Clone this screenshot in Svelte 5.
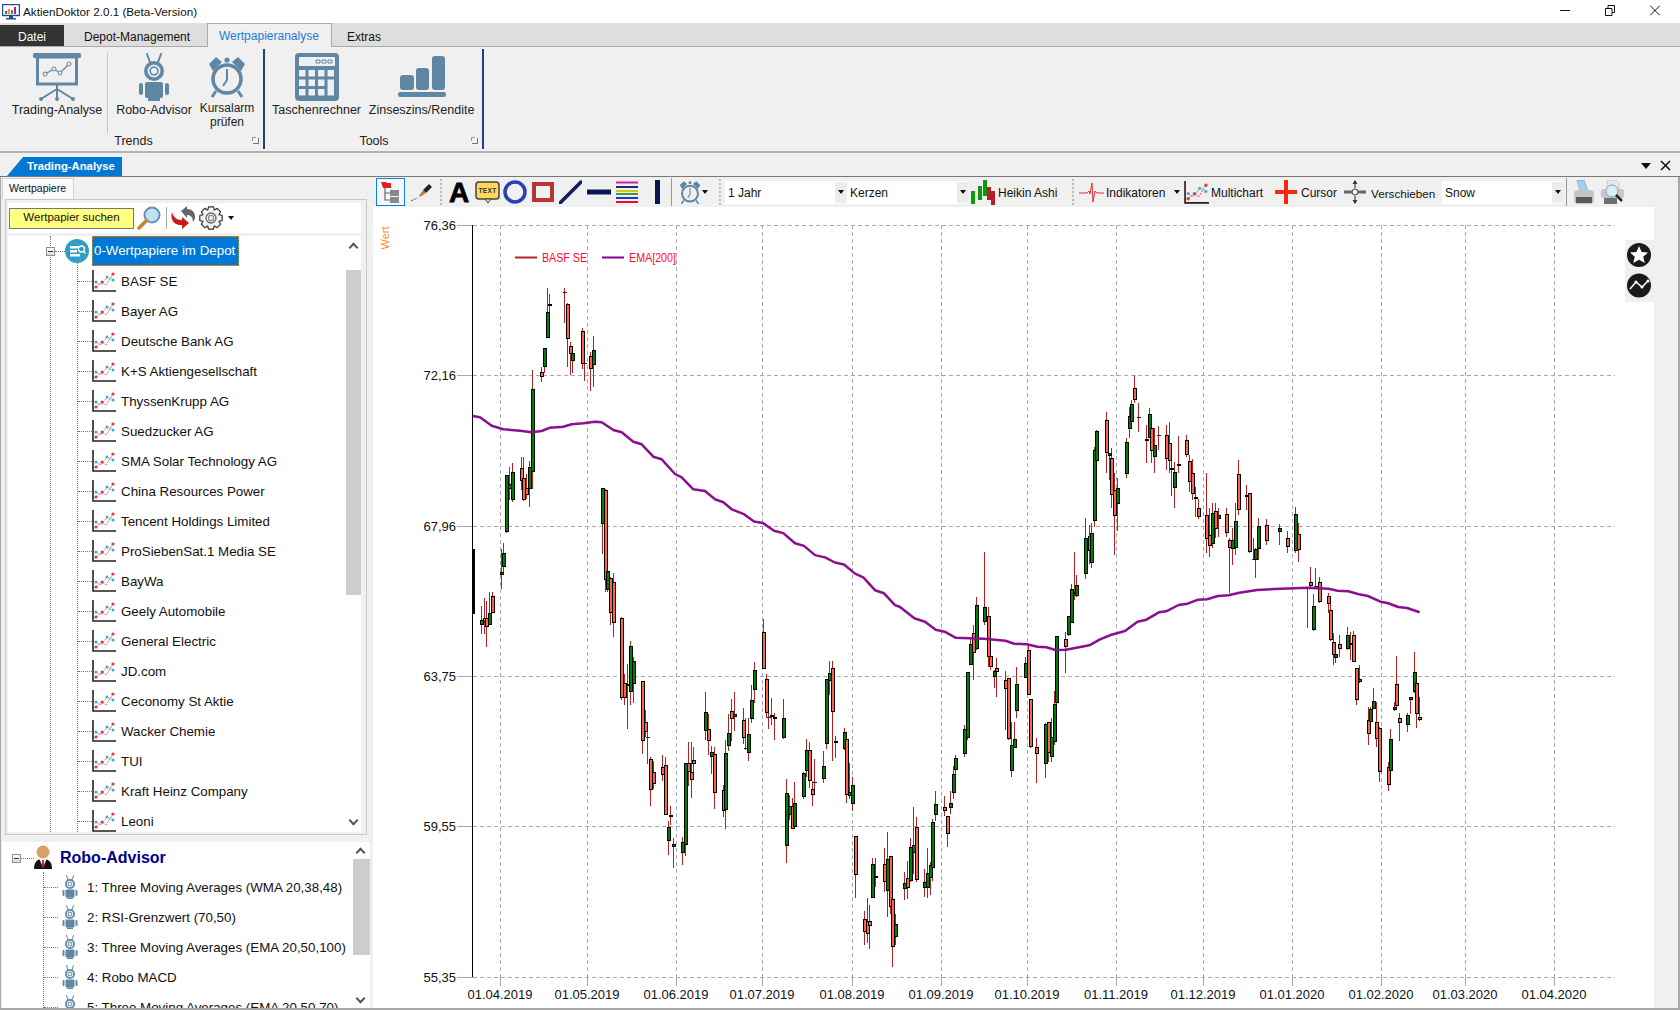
<script>
  const stocks = ["BASF SE", "Bayer AG", "Deutsche Bank AG", "K+S Aktiengesellschaft", "ThyssenKrupp AG", "Suedzucker AG", "SMA Solar Technology AG", "China Resources Power", "Tencent Holdings Limited", "ProSiebenSat.1 Media SE", "BayWa", "Geely Automobile", "General Electric", "JD.com", "Ceconomy St Aktie", "Wacker Chemie", "TUI", "Kraft Heinz Company", "Leoni"]
  const robots = ["1: Three Moving Averages (WMA 20,38,48)", "2: RSI-Grenzwert (70,50)", "3: Three Moving Averages (EMA 20,50,100)", "4: Robo MACD", "5: Three Moving Averages (EMA 20,50,70)"]

  // candles: x, wick top, wick bottom, body top, body bottom, kind
  const full = [
    [506, 475, 533, 475, 531.7, "g"], [509.3, 466.7, 500, 484, 489, "g"], [512.3, 462.7, 502, 472, 499.6, "g"],
    [521, 457, 490, 468, 480.7, "r"], [523.3, 457, 501, 478, 499.6, "r"], [526.3, 474, 499, 488, 494.5, "r"],
    [529.3, 460.7, 507, 466.7, 488.5, "g"], [532.3, 370, 489, 389.3, 472, "g"], [602, 488, 553.7, 488, 524, "g"], [604.7, 489, 592, 489.5, 580, "r"],
  ]
  const z6 = [
    [364,290,335,307,320,"r"],[372,265,308,235,292,"g"],[381,55,205,127,205,"g"],[388,72,200,103,107,"g"],[433,55,160,66,67,"d"],[441,100,290,103,208,"r"],[450,215,315,229,253,"r"],[457,235,308,248,272,"g"],[485,175,296,184,283,"r"],[493,252,332,278,279,"d"],[510,245,362,257,298,"r"],[518,198,350,241,286,"g"],
  ]
  const z7 = [
    [182,373,455,415,430,"g"],[191,350,455,407,420,"r"],[199,358,493,407,436,"r"],[208,332,430,392,430,"g"],[217,330,393,344,392,"r"],[242,205,322,273,280,"g"],[250,187,275,217,256,"g"],[562,172,330,268,326,"g"],[571,288,430,289,394,"r"],[579,275,463,303,424,"r"],[604,405,650,408,646,"r"],[612,575,665,600,646,"r"],[622,545,738,603,607,"g"],[631,475,665,492,628,"g"],[640,525,660,534,602,"g"],[666,595,810,596,773,"r"],[674,680,760,717,745,"r"],[682,722,840,761,762,"d"],[691,820,963,826,918,"r"],[700,830,915,865,900,"r"],[726,812,890,848,874,"r"],[735,820,990,842,990,"r"],[743,1010,1110,1025,1069,"g"],[751,963,1020,992,998,"r"],[760,1060,1147,1078,1085,"g"],[787,1055,1138,1070,1103,"g"],[795,838,1113,838,1080,"g"],[804,775,905,838,865,"r"],[813,775,940,865,886,"r"],[820,790,880,829,841,"r"],[856,628,770,685,741,"g"],[865,692,812,736,773,"r"],[873,788,870,806,820,"g"],[882,790,972,810,927,"r"],[908,903,998,918,980,"r"],[916,770,1032,809,977,"g"],[925,692,802,747,788,"g"],[934,648,772,682,708,"r"],[943,628,742,693,702,"g"],[968,675,780,711,762,"r"],[976,705,800,794,795,"d"],[985,705,832,752,809,"g"],[994,605,720,652,708,"g"],[1003,538,660,563,622,"g"],[1029,410,560,449,560,"r"],[1037,575,705,590,690,"r"],[1045,660,738,702,703,"d"],[1054,645,725,694,700,"g"],[1063,690,768,702,708,"r"],[1089,648,765,705,764,"g"],[1098,885,1132,925,1084,"g"],[1106,932,1005,965,990,"g"],[1115,940,1032,965,1032,"r"],[1123,893,1025,955,1025,"g"],[1150,865,943,868,937,"g"],[1159,767,880,798,862,"g"],[1167,775,910,798,890,"r"],[1175,890,965,915,933,"r"],[1183,825,925,894,895,"d"],[1210,803,895,845,884,"g"],[1219,590,795,590,782,"g"],[1227,535,635,570,596,"g"],[1236,535,832,555,687,"r"],[1244,758,822,773,779,"g"],[1271,735,798,744,797,"g"],[1279,745,955,765,933,"r"],[1288,838,945,922,935,"g"],[1296,880,980,903,957,"g"],[1305,1052,1236,1052,1167,"r"],[1331,1275,1375,1298,1338,"r"],[1340,1235,1370,1304,1344,"r"],[1348,1258,1388,1304,1318,"r"],[1357,1118,1235,1137,1235,"g"],[1366,1118,1205,1170,1175,"r"],[1391,1088,1220,1135,1190,"r"],[1400,1042,1293,1120,1217,"g"],[1409,1113,1285,1113,1262,"r"],[1417,1238,1440,1238,1380,"r"],[1426,1285,1375,1313,1353,"g"],[1451,1160,1242,1193,1211,"g"],[1460,1128,1240,1178,1206,"r"],[1469,1060,1190,1085,1185,"g"],[1478,968,1165,1080,1103,"g"],[1487,998,1190,1025,1182,"r"],
  ]
  const z9 = [
    [72,448,530,487,503,"g"],[80,385,533,460,503,"g"],[89,427,525,436,475,"g"],[97,297,483,307,445,"g"],[106,213,302,253,284,"g"],[133,228,288,262,272,"r"],[141,289,380,289,341,"r"],[150,213,282,250,263,"g"],[158,138,237,163,218,"g"],[166,105,205,115,149,"g"],
  ]
  const z8 = [
    [178,1095,1190,1107,1182,"g"],[188,935,1140,937,1135,"g"],[197,835,915,853,915,"g"],[205,795,960,818,880,"r"],[213,712,870,736,868,"g"],[236,575,795,742,785,"g"],[245,740,920,769,892,"r"],[253,870,930,889,920,"r"],[262,930,985,932,950,"g"],[268,895,1012,923,935,"r"],[293,933,1110,960,986,"r"],[301,955,1140,955,1138,"r"],[310,1087,1250,1155,1232,"g"],[318,1087,1165,1138,1163,"g"],[326,920,1075,973,1052,"g"],[349,890,955,910,955,"g"],[357,855,1005,871,1004,"r"],[365,1017,1165,1018,1162,"r"],[382,1135,1268,1162,1181,"r"],[406,1090,1255,1093,1213,"g"],[414,1085,1205,1087,1180,"r"],[422,1075,1205,1132,1192,"g"],[430,993,1155,1033,1145,"g"],[438,828,1037,829,1028,"g"],[463,815,938,838,860,"r"],[470,770,828,767,826,"g"],[479,672,790,686,788,"g"],[486,577,720,695,701,"g"],[494,645,710,676,709,"g"],[519,475,657,535,643,"g"],[528,495,612,527,574,"r"],[535,490,623,518,610,"g"],[543,260,500,271,484,"g"],[550,210,340,212,304,"g"],[576,155,340,181,280,"r"],[584,280,360,280,287,"g"],[592,265,445,295,406,"r"],[600,340,585,389,469,"r"],[607,355,512,385,433,"g"],[632,235,355,247,341,"g"],[640,140,235,169,208,"g"],[648,120,200,133,185,"g"],[656,46,130,85,121,"r"],[665,128,215,172,173,"d"],[688,195,308,238,244,"g"],[696,145,235,163,233,"g"],[704,188,308,205,274,"r"],[712,205,338,256,290,"g"],[721,198,270,226,227,"d"],[745,195,330,226,296,"r"],[752,185,340,250,302,"r"],[760,300,408,325,331,"g"],[768,305,445,337,385,"g"],[777,228,340,313,319,"g"],[801,225,290,241,284,"r"],[810,285,395,302,367,"r"],[818,298,420,338,403,"r"],[825,380,470,412,418,"g"],[833,418,478,445,470,"r"],[858,340,580,466,538,"r"],[866,445,590,524,558,"r"],[874,428,565,458,553,"g"],[882,430,533,452,508,"r"],[889,445,532,464,478,"g"],[914,445,530,463,518,"r"],[922,535,700,539,563,"r"],[930,505,615,541,568,"g"],[938,430,585,484,565,"g"],[946,300,465,343,451,"r"],[970,375,450,404,412,"g"],[978,398,580,400,575,"r"],[987,533,600,598,599,"d"],[995,565,655,568,601,"g"],[1003,475,600,499,568,"g"],[1026,478,555,496,544,"r"],[1060,493,555,505,517,"g"],[1083,513,580,535,562,"r"],[1107,440,580,463,574,"g"],[1115,490,605,523,571,"r"],[1140,680,803,680,681,"d"],[1147,622,680,667,677,"r"],[1155,703,812,737,811,"g"],[1163,625,678,677,678,"d"],[1172,650,730,667,727,"r"],[1197,700,760,709,731,"r"],[1204,730,842,751,841,"r"],[1212,820,915,847,886,"r"],[1219,870,908,881,895,"g"],[1228,825,890,853,868,"r"],[1252,800,870,826,868,"g"],[1260,815,900,848,856,"g"],[1268,812,905,826,905,"r"],[1277,925,1035,925,1021,"r"],[1285,915,970,956,967,"g"],[1309,1040,1155,1081,1123,"r"],[1317,1040,1120,1048,1085,"g"],[1325,985,1045,1024,1046,"g"],[1332,1027,1160,1085,1138,"r"],[1341,1100,1265,1103,1237,"r"],[1365,1205,1292,1222,1276,"r"],[1373,1107,1262,1138,1234,"g"],[1382,1027,1052,1042,1049,"g"],[1390,888,1050,973,1037,"r"],[1398,1060,1142,1075,1090,"r"],[1420,1060,1115,1064,1096,"g"],[1429,1010,1062,1012,1021,"g"],[1438,877,998,937,997,"g"],[1446,950,1105,970,1063,"r"],[1454,1010,1082,1072,1081,"r"],
  ]

  function conv(list, ox, oy, sx, sy) {
    return list.map((c) => ({
      x: Math.round(ox + c[0] / sx),
      wt: Math.round(oy + c[1] / sy),
      wb: Math.round(oy + c[2] / sy),
      bt: Math.round(oy + c[3] / sy),
      bb: Math.round(oy + c[4] / sy),
      k: c[5],
    }))
  }

  const candles = [
    ...full.map((c) => ({ x: Math.round(c[0]), wt: Math.round(c[1]), wb: Math.round(c[2]), bt: Math.round(c[3]), bb: Math.round(c[4]), k: c[5] })),
    ...conv(z6, 420, 270, 3, 3),
    ...conv(z7, 420, 480, 3, 2.958),
    ...conv(z9, 900, 720, 3, 3),
    ...conv(z8, 900, 360, 2.8, 3),
  ]

  const ema6 = [[158,438],[180,442],[215,467],[250,478],[300,482],[335,487],[365,483],[390,473],[430,470],[455,463],[490,460],[525,455],[545,457],[580,480],[605,487],[640,515],[665,523],[700,560],[725,568],[765,612],[785,622],[820,658],[855,663],[885,688],[910,697],[935,718]]
  const ema7 = [[970,100],[1002,123],[1028,127],[1062,150],[1090,157],[1125,187],[1152,195],[1185,222],[1215,229],[1245,244],[1272,250],[1305,277],[1330,288],[1365,326],[1392,335],[1425,370]]
  const ema8 = [[0,741],[40,775],[70,785],[100,809],[125,815],[155,833],[235,836],[295,842],[320,851],[355,853],[385,860],[410,862],[435,870],[465,869],[530,856],[560,838],[590,825],[630,813],[665,785],[690,779],[725,757],[745,754],[780,735],[805,731],[835,719],[860,718],[890,708],[920,706],[950,698],[1000,690],[1050,687],[1140,683],[1200,686],[1225,692],[1255,694],[1285,703],[1310,708],[1345,725],[1365,729],[1395,741],[1420,744],[1455,757]]
  const emaPoints = [
    ...ema6.map((p) => [420 + p[0] / 3, 270 + p[1] / 3]),
    ...ema7.map((p) => [420 + p[0] / 3, 480 + p[1] / 2.958]),
    ...ema8.map((p) => [900 + p[0] / 2.8, 360 + p[1] / 3]),
  ].map((p) => p[0].toFixed(1) + "," + p[1].toFixed(1)).join(" ")

  const yLines = [[225, "76,36"], [375, "72,16"], [526, "67,96"], [676, "63,75"], [826, "59,55"], [977, "55,35"]]
  const xLines = [[500, "01.04.2019"], [587, "01.05.2019"], [676, "01.06.2019"], [762, "01.07.2019"], [852, "01.08.2019"], [941, "01.09.2019"], [1027, "01.10.2019"], [1116, "01.11.2019"], [1203, "01.12.2019"], [1292, "01.01.2020"], [1381, "01.02.2020"], [1465, "01.03.2020"], [1554, "01.04.2020"]]

  // 8 tooth outline for the settings icon
  function gearPoints(cx, cy, outer, inner, teeth) {
    const pts = []
    const step = (Math.PI * 2) / teeth
    for (let i = 0; i < teeth; i++) {
      const a = i * step
      for (const [r, d] of [[inner, -0.5], [outer, -0.28], [outer, 0.28], [inner, 0.5]]) {
        const t = a + d * step
        pts.push((cx + Math.cos(t) * r).toFixed(1) + "," + (cy + Math.sin(t) * r).toFixed(1))
      }
    }
    return pts.join(" ")
  }
  const gear = gearPoints(12, 12, 11.5, 8.5, 8)
</script>

{#snippet chartIcon(w, h)}
  <svg width={w} height={h} viewBox="0 0 24 24">
    <path d="M1 1V22H24" fill="none" stroke="#222" stroke-width="1.6" />
    <polyline points="4,18 10,13 14,16 21,5" fill="none" stroke="#ef6a6a" stroke-width="1" stroke-dasharray="2 1" />
    <polyline points="4,13 9,16 15,8 21,11" fill="none" stroke="#55b5e6" stroke-width="1" stroke-dasharray="2 1" />
    <circle cx="4" cy="18" r="1.6" fill="#e33" /><circle cx="10" cy="13" r="1.5" fill="#e33" /><circle cx="21" cy="5" r="1.6" fill="#e33" />
    <circle cx="4" cy="13" r="1.5" fill="#3aa9e0" /><circle cx="15" cy="8" r="1.5" fill="#3aa9e0" /><circle cx="21" cy="11" r="1.5" fill="#3aa9e0" />
  </svg>
{/snippet}

{#snippet robot(w, h)}
  <svg width={w} height={h} viewBox="0 0 30 48">
    <path d="M8 1l4 11M22 1l-4 11" stroke="#5f87a3" stroke-width="2" stroke-linecap="round" />
    <circle cx="15" cy="18" r="10" fill="#5f87a3" />
    <circle cx="15" cy="18" r="6.500" fill="#dfe8ee" /><circle cx="15" cy="18" r="4.500" fill="#5f87a3" /><circle cx="15" cy="18" r="3" fill="#eef3f6" />
    <rect x="6" y="29" width="18" height="16" rx="2" fill="#5f87a3" />
    <rect x="0" y="30" width="4" height="12" rx="2" fill="#5f87a3" /><rect x="26" y="30" width="4" height="12" rx="2" fill="#5f87a3" />
    <rect x="9" y="45" width="12" height="3" fill="#5f87a3" />
  </svg>
{/snippet}

{#snippet clock(w, h)}
  <svg width={w} height={h} viewBox="0 0 38 44">
    <circle cx="19" cy="24" r="14" fill="none" stroke="#5f87a3" stroke-width="3.500" />
    <path d="M19 14v11l-4 6" fill="none" stroke="#5f87a3" stroke-width="2" />
    <path d="M1 9l7-7 6 5-9 9zM37 9l-7-7-6 5 9 9z" fill="#5f87a3" />
    <circle cx="19" cy="5" r="2.600" fill="#5f87a3" />
    <path d="M8 36l-4 6M30 36l4 6" stroke="#5f87a3" stroke-width="3" />
  </svg>
{/snippet}

<div class="app">
  <div class="titlebar">
    <svg class="appicon" width="18" height="16" viewBox="0 0 18 16">
      <rect x="0.5" y="0.5" width="17" height="11" fill="#fff" stroke="#1c4f94" stroke-width="1.4" />
      <rect x="3" y="7" width="2" height="3" fill="#d33" /><rect x="6" y="5" width="2" height="5" fill="#e89a1c" /><rect x="9" y="6" width="2" height="4" fill="#2f9e44" /><rect x="12" y="3" width="2" height="7" fill="#c2187c" />
      <path d="M7 12h4v2h3v1.500H4V14h3z" fill="#1c4f94" />
    </svg>
    <span class="apptitle">AktienDoktor 2.0.1 (Beta-Version)</span>
    <div class="winbtns">
      <svg width="10" height="11" viewBox="0 0 10 11"><path d="M0 5.500h10" stroke="#111" /></svg>
      <svg width="10" height="11" viewBox="0 0 10 11"><path d="M.5 3.500h6.500v7H.5zM3 3.500V.5h6.500v7H7" fill="none" stroke="#111" /></svg>
      <svg width="10" height="11" viewBox="0 0 10 11"><path d="M0 .5l10 10M10 .5L0 10.500" fill="none" stroke="#111" /></svg>
    </div>
  </div>

  <div class="tabs">
    <div class="tab datei">Datei</div>
    <div class="tab depot">Depot-Management</div>
    <div class="tab active">Wertpapieranalyse</div>
    <div class="tab extras">Extras</div>
  </div>

  <div class="ribbon">
    <div class="group trends">
      <div class="grp-items">
        <div class="rb w94">
          <div class="rb-icon">
            <svg width="48" height="48" viewBox="0 0 48 48">
              <rect x="0" y="0" width="48" height="5" rx="1.500" fill="#5f87a3" />
              <rect x="4.500" y="4" width="39" height="27" fill="#f0f0f0" stroke="#5f87a3" stroke-width="3" />
              <polyline points="12,21 21,16 27,20 36,11" fill="none" stroke="#5f87a3" stroke-width="1.300" />
              <circle cx="12" cy="21" r="2" fill="#f0f0f0" stroke="#5f87a3" /><circle cx="21" cy="16" r="2" fill="#f0f0f0" stroke="#5f87a3" /><circle cx="27" cy="20" r="2" fill="#f0f0f0" stroke="#5f87a3" /><circle cx="36" cy="11" r="2" fill="#f0f0f0" stroke="#5f87a3" />
              <path d="M24 32v14M24 36L8 46M24 36l16 10" stroke="#5f87a3" stroke-width="2" />
              <circle cx="8" cy="46" r="2" fill="#5f87a3" /><circle cx="24" cy="46" r="2" fill="#5f87a3" /><circle cx="40" cy="46" r="2" fill="#5f87a3" />
            </svg>
          </div>
          <span>Trading-Analyse</span>
        </div>
        <div class="rb-sep"></div>
        <div class="rb w88">
          <div class="rb-icon">{@render robot(30, 48)}</div>
          <span>Robo-Advisor</span>
        </div>
        <div class="rb w58">
          <div class="rb-icon">{@render clock(38, 44)}</div>
          <span class="two">Kursalarm<br />prüfen</span>
        </div>
      </div>
      <div class="grp-label">Trends<span class="launcher"></span></div>
    </div>
    <div class="group tools">
      <div class="grp-items">
        <div class="rb w90">
          <div class="rb-icon">
            <svg width="44" height="48" viewBox="0 0 44 48">
              <rect width="44" height="48" rx="4" fill="#5f87a3" />
              <rect x="4" y="4" width="36" height="9" rx="1" fill="#eef1f3" />
              <path d="M21 7h4v3h-4zM27 7h4v3h-4zM33 7h4v3h-4z" fill="none" stroke="#5f87a3" />
              {#each [0, 1, 2, 3] as c}
                {#each [0, 1, 2] as r}
                  {#if !(c === 3 && r > 0)}
                    <rect x={4 + c * 9.500} y={17 + r * 9.500} width="6.500" height="6.500" fill="#eef1f3" />
                  {/if}
                {/each}
              {/each}
              <rect x="32.500" y="26.500" width="6.500" height="16" fill="#eef1f3" />
            </svg>
          </div>
          <span>Taschenrechner</span>
        </div>
        <div class="rb w122">
          <div class="rb-icon">
            <svg width="48" height="41" viewBox="0 0 48 41">
              <rect x="2" y="19" width="14" height="15" rx="3" fill="#5f87a3" />
              <rect x="18" y="12" width="13" height="22" rx="3" fill="#5f87a3" />
              <rect x="34" y="0" width="13" height="34" rx="3" fill="#5f87a3" />
              <rect x="0" y="36" width="48" height="5" rx="2" fill="#5f87a3" />
            </svg>
          </div>
          <span>Zinseszins/Rendite</span>
        </div>
      </div>
      <div class="grp-label">Tools<span class="launcher"></span></div>
    </div>
  </div>

  <div class="docbar">
    <div class="doctab">Trading-Analyse</div>
    <div class="docbtns">
      <span class="caret big"></span>
      <svg width="11" height="11" viewBox="0 0 11 11"><path d="M1 1l9 9M10 1l-9 9" stroke="#111" stroke-width="1.500" /></svg>
    </div>
  </div>

  <div class="main">
    <div class="left">
      <div class="lefttabs"><div class="lefttab">Wertpapiere</div></div>
      <div class="panel">
        <div class="searchbar">
          <div class="searchbox">Wertpapier suchen</div>
          <svg class="ml3" width="24" height="24" viewBox="0 0 24 24">
            <circle cx="15" cy="9" r="7.500" fill="#bfe0f5" stroke="#6b93b5" stroke-width="2" />
            <path d="M9.500 14.500L2 22" stroke="#c9822c" stroke-width="3.500" stroke-linecap="round" />
          </svg>
          <div class="vsep"></div>
          <svg class="ml4" width="25" height="24" viewBox="0 0 25 24">
            <path d="M10 5l6-5v3c5 0 8 3 8 8 0 2-1 4-2 5 0-4-2-7-6-7v3z" fill="#666" />
            <path d="M1 6c-2 6 1 13 9 13h1v4l7-6-7-6v3h-1C6 14 2 11 1 6z" fill="#cc1a1a" />
          </svg>
          <svg class="ml3" width="24" height="24" viewBox="0 0 24 24">
            <polygon points={gear} fill="#f4f4f4" stroke="#333" stroke-width="1.200" stroke-linejoin="round" />
            <circle cx="12" cy="12" r="5" fill="none" stroke="#666" stroke-width="1.300" />
            <circle cx="12" cy="12" r="2.600" fill="none" stroke="#888" stroke-width="1.200" />
          </svg>
          <span class="caret ml5"></span>
        </div>
        <div class="treewrap">
          <div class="tree">
            <div class="trunk">
              <div class="trow">
                <span class="expander"></span>
                <span class="conn c10"></span>
                <svg width="24" height="24" viewBox="0 0 24 24">
                  <circle cx="12" cy="12" r="12" fill="#2f9fc5" />
                  <path d="M5 7h9v2.500H5zM5 11h7v2.500H5zM5 15h10v2.500H5z" fill="#fff" />
                  <circle cx="16.500" cy="10" r="3" fill="none" stroke="#fff" stroke-width="1.300" /><path d="M18.500 12.500l2 2" stroke="#fff" stroke-width="1.300" />
                </svg>
                <span class="sel">0-Wertpapiere im Depot</span>
              </div>
              <div class="children">
                {#each stocks as s}
                  <div class="trow">
                    <span class="conn c14"></span>
                    {@render chartIcon(24, 24)}
                    <span class="lbl">{s}</span>
                  </div>
                {/each}
              </div>
            </div>
          </div>
          <div class="scroll">
            <span class="chev up"></span>
            <div class="thumb t1"></div>
            <span class="chev down"></span>
          </div>
        </div>
      </div>

      <div class="robo">
        <div class="robotree">
          <div class="rhead">
            <span class="expander"></span>
            <span class="conn c13"></span>
            <svg width="18" height="24" viewBox="0 0 18 24">
              <circle cx="9" cy="7" r="6.500" fill="#d9a067" />
              <path d="M0 24c0-7 3-10 9-10s9 3 9 10z" fill="#111" />
              <path d="M5.500 14h7L9 23z" fill="#fff" />
              <path d="M8 15h2l-.2 2 .7 5H7.500l.7-5z" fill="#c11" />
            </svg>
            <span class="robotitle">Robo-Advisor</span>
          </div>
          <div class="rchildren">
            {#each robots as r}
              <div class="trow">
                <span class="conn c14"></span>
                <span class="ricon">{@render robot(16, 24)}</span>
                <span class="lbl rlbl">{r}</span>
              </div>
            {/each}
          </div>
        </div>
        <div class="scroll s2">
          <span class="chev up"></span>
          <div class="thumb t2"></div>
          <span class="chev down"></span>
        </div>
      </div>
    </div>

    <div class="right">
      <div class="toolbar">
        <div class="tselect">
          <svg width="25" height="24" viewBox="0 0 25 24">
            <path d="M3 2h5l1 1h4v5H5z" fill="#d22" />
            <path d="M7 8v12h5M7 13h5" fill="none" stroke="#666" stroke-width="1.200" />
            <rect x="12" y="10" width="9" height="6" fill="#888" /><rect x="12" y="17" width="9" height="6" fill="#888" />
          </svg>
        </div>
        <svg class="m5" width="25" height="24" viewBox="0 0 25 24">
          <path d="M13 10l6-6 3 3-6 6z" fill="#222" />
          <path d="M9 16l4-6 3 3-6 4z" fill="#b6862c" />
          <path d="M1 21l6-3" stroke="#445" stroke-dasharray="2 1" />
        </svg>
        <span class="dots m5"></span>
        <span class="bigA">A</span>
        <svg class="m7" width="25" height="24" viewBox="0 0 25 24">
          <rect x="1" y="2" width="23" height="17" rx="3" fill="#ffd75e" stroke="#444" stroke-width="1.500" />
          <path d="M10 19h6l-3 4z" fill="#ffd75e" stroke="#444" />
          <text x="12.500" y="13" class="bubbletext">TEXT</text>
        </svg>
        <svg class="m3" width="24" height="24" viewBox="0 0 24 24"><circle cx="12" cy="12" r="10" fill="none" stroke="#2a3fb0" stroke-width="3.500" /></svg>
        <svg class="m5" width="22" height="24" viewBox="0 0 22 24"><rect x="2" y="4" width="18" height="16" fill="none" stroke="#b5333a" stroke-width="4" /></svg>
        <svg class="m5" width="23" height="24" viewBox="0 0 23 24"><path d="M1 23L22 2" stroke="#101f5c" stroke-width="3.500" stroke-linecap="round" /></svg>
        <svg class="m5" width="24" height="24" viewBox="0 0 24 24"><path d="M0 12h24" stroke="#0c1654" stroke-width="5" /></svg>
        <svg class="m5" width="22" height="24" viewBox="0 0 22 24">
          <path d="M0 2.500h22" stroke="#d020b0" stroke-width="2" /><path d="M0 7h22" stroke="#1c2a7a" stroke-width="2" /><path d="M0 11h22" stroke="#c8c820" stroke-width="2" /><path d="M0 14h22" stroke="#3aa02a" stroke-width="2" /><path d="M0 18h22" stroke="#2030d0" stroke-width="2" /><path d="M0 22h22" stroke="#e01030" stroke-width="2" />
        </svg>
        <svg class="m17" width="5" height="24" viewBox="0 0 5 24"><rect width="5" height="24" fill="#0c1654" /></svg>
        <span class="vbar m11"></span>
        <span class="m7 iconbox">{@render clock(22, 25)}</span>
        <span class="caret wide"></span>
        <span class="dots m10"></span>
        <div class="combo m4"><span>1 Jahr</span><b><i class="caret"></i></b></div>
        <div class="combo m1"><span>Kerzen</span><b><i class="caret"></i></b></div>
        <svg class="m3" width="24" height="26" viewBox="0 0 24 26">
          <rect x="0" y="12" width="4" height="13" fill="#0a9a0a" /><rect x="7" y="7" width="4" height="14" fill="#0a9a0a" /><rect x="12" y="1" width="4" height="16" fill="#0a9a0a" /><rect x="16" y="8" width="4" height="13" fill="#b3202a" /><rect x="20" y="12" width="4" height="14" fill="#b3202a" />
        </svg>
        <span class="tlbl w60 m3">Heikin Ashi</span>
        <span class="dots m14"></span>
        <svg class="m5" width="25" height="24" viewBox="0 0 25 24">
          <polyline points="0,13 8,13 10,11 11,14 13,3 14,22 16,11 18,13 25,13" fill="none" stroke="#e03030" stroke-width="1" />
        </svg>
        <span class="tlbl w60 m2">Indikatoren</span>
        <span class="caret wide m8"></span>
        <span class="m3 iconbox">{@render chartIcon(25, 25)}</span>
        <span class="tlbl w55 m2">Multichart</span>
        <svg class="m9" width="22" height="24" viewBox="0 0 22 24"><path d="M11 0v24M0 12h22" stroke="#f02a10" stroke-width="4" /></svg>
        <span class="tlbl w35 m4">Cursor</span>
        <svg class="m8" width="22" height="24" viewBox="0 0 22 24">
          <path d="M11 1v7M11 16v7" stroke="#666" stroke-width="1.500" />
          <path d="M0 12h8M14 12h8" stroke="#666" stroke-width="3" />
          <circle cx="11" cy="12" r="3" fill="none" stroke="#444" />
          <path d="M11 0l-2.500 4h5zM11 24l-2.500-4h5z" fill="#333" />
        </svg>
        <span class="tlbl w63 m5 condensed">Verschieben</span>
        <div class="combo m8"><span>Snow</span><b><i class="caret"></i></b></div>
        <span class="vbar m3"></span>
        <svg class="m7" width="20" height="25" viewBox="0 0 20 25">
          <path d="M3 0l7-0 4 11H6z" fill="#9fd0ee" stroke="#6a9ec0" stroke-width=".6" />
          <path d="M0 13c0-2 2-3 4-3h12c2 0 4 1 4 3v7c0 3-2 4-4 4H4c-2 0-4-1-4-4z" fill="#c2c6c9" />
          <rect x="2" y="17" width="16" height="6" fill="#55595c" />
        </svg>
        <svg class="m7" width="23" height="25" viewBox="0 0 23 25">
          <path d="M6 0h9l3 3v8H6z" fill="#e6e8ea" stroke="#aab" stroke-width=".5" />
          <rect x="0" y="9" width="23" height="9" rx="2" fill="#c4c8cb" />
          <circle cx="11" cy="11" r="6" fill="#d6eef7" stroke="#99a" />
          <path d="M15 15l6 6" stroke="#222" stroke-width="2.500" />
          <rect x="3" y="18" width="13" height="6" fill="#6b6f72" />
        </svg>
      </div>

      <div class="chart">
        <svg width="1281" height="801" viewBox="373 207 1281 801">
          <text class="wert" transform="translate(389 238) rotate(-90)" text-anchor="middle">Wert</text>

          <g shape-rendering="crispEdges">
            {#each yLines as l}
              <path d="M457 {l[0] + 0.5}H473" stroke="#a9a9a9" />
              <path d="M473 {l[0] + 0.5}H1615" stroke="#a9a9a9" stroke-dasharray="4 3" />
            {/each}
            {#each xLines as l}
              <path d="M{l[0] + 0.5} 225V977" stroke="#a9a9a9" stroke-dasharray="4 3" />
              <path d="M{l[0] + 0.5} 977V986" stroke="#a9a9a9" />
            {/each}
            <path d="M472.500 225V977" stroke="#000" />
            <rect x="473" y="549" width="2" height="65" fill="#000" />

            {#each candles as c}
              <path d="M{c.x + 0.5} {c.wt}V{c.wb}" stroke="#b22222" />
            {/each}
            {#each candles as c}
              {#if c.k === "d"}
                <rect x={c.x - 1.500} y={c.bt} width="4" height="1" fill="#222" />
              {:else}
                <rect x={c.x - 1} y={c.bt + 0.5} width="3" height={Math.max(c.bb - c.bt - 1, 1)} fill={c.k === "g" ? "#008000" : "#ff6347"} stroke="#000" />
              {/if}
            {/each}
          </g>

          <polyline points={emaPoints} fill="none" stroke="#8b0f8f" stroke-width="2.500" stroke-linejoin="round" />

          <path d="M515 257.500h22" stroke="#b22222" stroke-width="2" />
          <text class="legend" x="542" y="262" textLength="45" lengthAdjust="spacingAndGlyphs">BASF SE</text>
          <path d="M602 257.500h22" stroke="#8b008b" stroke-width="2" />
          <text class="legend" x="629" y="262" textLength="47" lengthAdjust="spacingAndGlyphs">EMA[200]</text>

          {#each yLines as l}
            <text class="axis" x="456" y={l[0] + 5} text-anchor="end">{l[1]}</text>
          {/each}
          {#each xLines as l}
            <text class="axis" x={l[0]} y="999" text-anchor="middle">{l[1]}</text>
          {/each}

          <rect x="1625" y="240" width="29" height="62" fill="#efefef" />
          <circle cx="1639" cy="255" r="12" fill="#1a1a1a" />
          <polygon points="1639,246 1641.600,252 1648,252.500 1643.200,256.800 1644.800,263 1639,259.800 1633.200,263 1634.800,256.800 1630,252.500 1636.400,252" fill="#fff" />
          <circle cx="1639" cy="285.500" r="12" fill="#1a1a1a" />
          <polyline points="1630,289 1636,282 1642,287 1648,281" fill="none" stroke="#fff" stroke-width="1.500" />
          <circle cx="1636" cy="282" r="1.500" fill="#fff" /><circle cx="1642" cy="287" r="1.500" fill="#fff" /><circle cx="1648" cy="281" r="1.500" fill="#fff" />
        </svg>
      </div>
    </div>
  </div>
</div>

<style>
  :global(body) {
    margin: 0;
    background: #f0f0f0;
  }
  .app {
    width: 1680px;
    height: 1010px;
    display: flex;
    flex-direction: column;
    overflow: hidden;
    font-family: "Liberation Sans", Arial, sans-serif;
    font-size: 12px;
    color: #111;
  }
  svg {
    display: block;
    flex: none;
  }

  .titlebar {
    height: 23px;
    flex: none;
    background: #fff;
    display: flex;
    align-items: center;
  }
  .appicon {
    margin-left: 2px;
  }
  .apptitle {
    margin-left: 3px;
    font-size: 11.700px;
  }
  .winbtns {
    margin-left: auto;
    display: flex;
    gap: 35px;
    padding-right: 20px;
    margin-top: -3px;
  }

  .tabs {
    height: 24px;
    flex: none;
    box-sizing: border-box;
    background: #dedede;
    border-bottom: 1px solid #aaa;
    display: flex;
    align-items: flex-end;
  }
  .tab {
    height: 21px;
    line-height: 24px;
    box-sizing: border-box;
  }
  .datei {
    width: 64px;
    background: #333;
    color: #fff;
    text-align: center;
  }
  .depot {
    width: 143px;
    padding-left: 20px;
  }
  .active {
    width: 125px;
    height: 24px;
    margin-bottom: -1px;
    padding-left: 11px;
    line-height: 25px;
    background: #f0f0f0;
    border: 1px solid #aaa;
    border-bottom: none;
    color: #1f7bd0;
  }
  .extras {
    padding-left: 15px;
  }

  .ribbon {
    height: 106px;
    flex: none;
    box-sizing: border-box;
    background: #f0f0f0;
    border-bottom: 2px solid #b4b4b4;
    display: flex;
    padding-top: 2px;
  }
  .group {
    height: 100px;
    box-sizing: border-box;
    border-right: 2px solid #1f3f86;
    display: flex;
    flex-direction: column;
  }
  .trends {
    width: 265px;
    padding-left: 10px;
  }
  .tools {
    width: 219px;
    padding-left: 7px;
  }
  .grp-items {
    display: flex;
    height: 85px;
  }
  .rb {
    display: flex;
    flex-direction: column;
    align-items: center;
    text-align: center;
    white-space: nowrap;
    color: #222;
    font-size: 12.500px;
  }
  .rb-icon {
    height: 53px;
    display: flex;
    align-items: center;
    justify-content: center;
    margin-top: 1px;
  }
  .rb span {
    line-height: 14px;
  }
  .rb span.two {
    margin-top: -2px;
    font-size: 12px;
  }
  .w94 {
    width: 94px;
  }
  .w88 {
    width: 88px;
  }
  .w58 {
    width: 58px;
  }
  .w90 {
    width: 90px;
  }
  .w122 {
    width: 122px;
  }
  .rb-sep {
    width: 1px;
    height: 80px;
    margin: 4px 2px 0 3px;
    background: #c4c4c4;
  }
  .grp-label {
    position: relative;
    text-align: center;
    margin-left: -6px;
    line-height: 14px;
    font-size: 12.500px;
    color: #222;
  }
  .launcher {
    position: absolute;
    right: 4px;
    top: 4px;
    width: 5px;
    height: 5px;
    border-right: 1px solid #777;
    border-bottom: 1px solid #777;
    box-shadow: -2px -2px 0 -1px #999;
  }

  .docbar {
    height: 24px;
    flex: none;
    box-sizing: border-box;
    background: #f0f0f0;
    border-bottom: 1px solid #777;
    display: flex;
    align-items: flex-end;
    padding-left: 7px;
  }
  .doctab {
    width: 115px;
    height: 19px;
    box-sizing: border-box;
    padding-left: 20px;
    line-height: 19px;
    font-size: 11.300px;
    background: #0078d4;
    color: #fff;
    font-weight: bold;
    clip-path: polygon(0 100%, 16px 0, 100% 0, 100% 100%);
  }
  .docbtns {
    margin-left: auto;
    align-self: center;
    display: flex;
    align-items: center;
    gap: 9px;
    padding-right: 9px;
    margin-top: 2px;
  }

  .main {
    flex: 1;
    min-height: 0;
    display: flex;
    box-sizing: border-box;
    border-bottom: 2px solid #a8a8a8;
    border-right: 2px solid #a8a8a8;
    border-left: 1px solid #a8a8a8;
  }

  .left {
    width: 369px;
    flex: none;
    display: flex;
    flex-direction: column;
  }
  .lefttabs {
    height: 22px;
    flex: none;
    display: flex;
    align-items: flex-end;
    padding-left: 1px;
  }
  .lefttab {
    width: 72px;
    height: 21px;
    box-sizing: border-box;
    padding-left: 6px;
    line-height: 18px;
    font-size: 10.500px;
    background: #fafafa;
    border: 1px solid #d0d0d0;
    border-bottom: none;
  }
  .panel {
    height: 636px;
    flex: none;
    margin: 0 3px 0 4px;
    box-sizing: border-box;
    border: 1px solid #c8c8c8;
    padding: 3px 5px 2px 2px;
  }
  .searchbar {
    height: 30px;
    background: #fff;
    display: flex;
    align-items: center;
  }
  .searchbox {
    width: 125px;
    height: 21px;
    margin-left: 1px;
    box-sizing: border-box;
    background: #ffff80;
    border: 1px solid #777;
    text-align: center;
    line-height: 16px;
    font-size: 11.500px;
  }
  .ml3 {
    margin-left: 3px;
  }
  .ml4 {
    margin-left: 4px;
  }
  .ml5 {
    margin-left: 5px;
  }
  .vsep {
    width: 1px;
    height: 22px;
    margin-left: 5px;
    background: #aaa;
  }
  .treewrap {
    margin-top: 3px;
    height: 596px;
    display: flex;
    background: #fff;
    overflow: hidden;
  }
  .tree {
    width: 338px;
    flex: none;
    overflow: hidden;
    padding-left: 42px;
    box-sizing: border-box;
    font-size: 13.330px;
  }
  .trunk {
    border-left: 1px dotted #777;
    height: 100%;
    box-sizing: border-box;
  }
  .trow {
    height: 30px;
    display: flex;
    align-items: center;
    white-space: nowrap;
    color: #111;
  }
  .expander {
    width: 9px;
    height: 9px;
    flex: none;
    box-sizing: border-box;
    border: 1px solid #8a8f9c;
    background: linear-gradient(#fff, #d8dae0);
    margin-left: -5px;
    position: relative;
  }
  .expander::after {
    content: "";
    position: absolute;
    left: 1px;
    right: 1px;
    top: 3px;
    height: 1px;
    background: #334;
  }
  .conn {
    height: 0;
    flex: none;
    border-top: 1px dotted #777;
  }
  .c10 {
    width: 10px;
  }
  .c13 {
    width: 13px;
  }
  .c14 {
    width: 14px;
  }
  .sel {
    margin-left: 3px;
    height: 30px;
    width: 147px;
    box-sizing: border-box;
    line-height: 28px;
    background: #0078d7;
    color: #fff;
    border: 1px dotted #f39000;
    padding-left: 1px;
    overflow: hidden;
  }
  .children {
    margin-left: 26px;
    border-left: 1px dotted #777;
    margin-top: -3px;
    padding-top: 3px;
  }
  .lbl {
    margin-left: 5px;
  }
  .scroll {
    flex: 1;
    display: flex;
    flex-direction: column;
    align-items: stretch;
    background: #fff;
  }
  .thumb {
    background: #cdcdcd;
  }
  .t1 {
    height: 325px;
  }
  .t2 {
    height: 96px;
  }
  .chev {
    height: 34px;
    flex: none;
    position: relative;
  }
  .chev.down {
    margin-top: auto;
    height: 24px;
  }
  .chev::after {
    content: "";
    position: absolute;
    left: 4px;
    width: 5px;
    height: 5px;
    border-left: 2px solid #555;
    border-top: 2px solid #555;
  }
  .chev.up::after {
    top: 8px;
    transform: rotate(45deg);
  }
  .chev.down::after {
    top: 9px;
    transform: rotate(225deg);
  }
  .s2 .chev.up {
    height: 17px;
  }
  .s2 .chev.up::after {
    top: 7px;
  }
  .s2 .chev.down::after {
    top: 11px;
  }

  .robo {
    margin: 7px 0 0 1px;
    flex: 1;
    min-height: 0;
    display: flex;
    background: #fff;
    overflow: hidden;
  }
  .robotree {
    width: 351px;
    flex: none;
    padding-left: 15px;
    box-sizing: border-box;
    font-size: 13.330px;
    overflow: hidden;
  }
  .rhead {
    height: 32px;
    display: flex;
    align-items: center;
    white-space: nowrap;
  }
  .rhead svg {
    margin-top: -3px;
  }
  .robotitle {
    margin-left: 8px;
    font-size: 16px;
    font-weight: bold;
    color: #00008b;
  }
  .rchildren {
    margin-left: 26px;
    border-left: 1px dotted #777;
    margin-top: -3px;
  }
  .rchildren .trow:first-child {
    margin-top: 1px;
  }
  .ricon {
    margin-left: 4px;
    flex: none;
  }
  .lbl.rlbl {
    margin-left: 9px;
  }

  .right {
    flex: 1;
    min-width: 0;
    display: flex;
    flex-direction: column;
    background: #f0f0f0;
  }
  .toolbar {
    height: 30px;
    flex: none;
    display: flex;
    align-items: center;
    padding-left: 6px;
    white-space: nowrap;
  }
  .tselect {
    width: 29px;
    height: 28px;
    box-sizing: border-box;
    border: 1px solid #0a84e0;
    background: #f6f6f6;
    display: flex;
    align-items: center;
    justify-content: center;
  }
  .dots {
    width: 1px;
    height: 26px;
    flex: none;
    border-left: 2px dotted #bbb;
    box-sizing: border-box;
  }
  .bigA {
    width: 18px;
    margin-left: 8px;
    font-size: 28px;
    font-weight: bold;
    line-height: 28px;
    text-align: center;
    color: #000;
    -webkit-text-stroke: 0.800px #000;
    display: flex;
    justify-content: center;
    margin-top: 1px;
  }
  .bubbletext {
    font-size: 6.500px;
    font-weight: bold;
    text-anchor: middle;
    letter-spacing: 0.400px;
    fill: #333;
  }
  .m1 {
    margin-left: 1px;
  }
  .m2 {
    margin-left: 2px;
  }
  .m3 {
    margin-left: 3px;
  }
  .m4 {
    margin-left: 4px;
  }
  .m5 {
    margin-left: 5px;
  }
  .m7 {
    margin-left: 7px;
  }
  .m8 {
    margin-left: 8px;
  }
  .m9 {
    margin-left: 9px;
  }
  .m10 {
    margin-left: 10px;
  }
  .m11 {
    margin-left: 11px;
  }
  .m14 {
    margin-left: 14px;
  }
  .m17 {
    margin-left: 17px;
  }
  .vbar {
    width: 1px;
    height: 28px;
    flex: none;
    background: #999;
  }
  .iconbox {
    flex: none;
  }
  .caret {
    display: block;
    width: 0;
    height: 0;
    flex: none;
    border-left: 3.500px solid transparent;
    border-right: 3.500px solid transparent;
    border-top: 4px solid #111;
  }
  .caret.wide {
    margin-right: 1px;
    margin-left: 1px;
  }
  .caret.wide.m8 {
    margin-left: 8px;
  }
  .caret.big {
    border-left-width: 5px;
    border-right-width: 5px;
    border-top-width: 6px;
  }
  .combo {
    width: 121px;
    height: 23px;
    flex: none;
    box-sizing: border-box;
    background: #fff;
    display: flex;
    align-items: center;
    padding-left: 3px;
  }
  .combo span {
    margin-top: 1px;
  }
  .combo b {
    margin-left: auto;
    width: 11px;
    height: 21px;
    background: #ececec;
    display: flex;
    align-items: center;
    justify-content: center;
  }
  .tlbl {
    flex: none;
    margin-top: 2px;
  }
  .condensed {
    font-size: 11.700px;
  }
  .w60 {
    width: 60px;
  }
  .w55 {
    width: 55px;
  }
  .w35 {
    width: 35px;
  }
  .w63 {
    width: 63px;
  }

  .chart {
    flex: 1;
    min-height: 0;
    margin-left: 3px;
    width: 1281px;
    background: #fff;
    overflow: hidden;
  }
  .wert {
    font-size: 11px;
    fill: #ff8c2a;
  }
  .legend {
    font-size: 12px;
    fill: #ff0a32;
  }
  .axis {
    font-size: 13px;
    fill: #111;
  }
</style>
